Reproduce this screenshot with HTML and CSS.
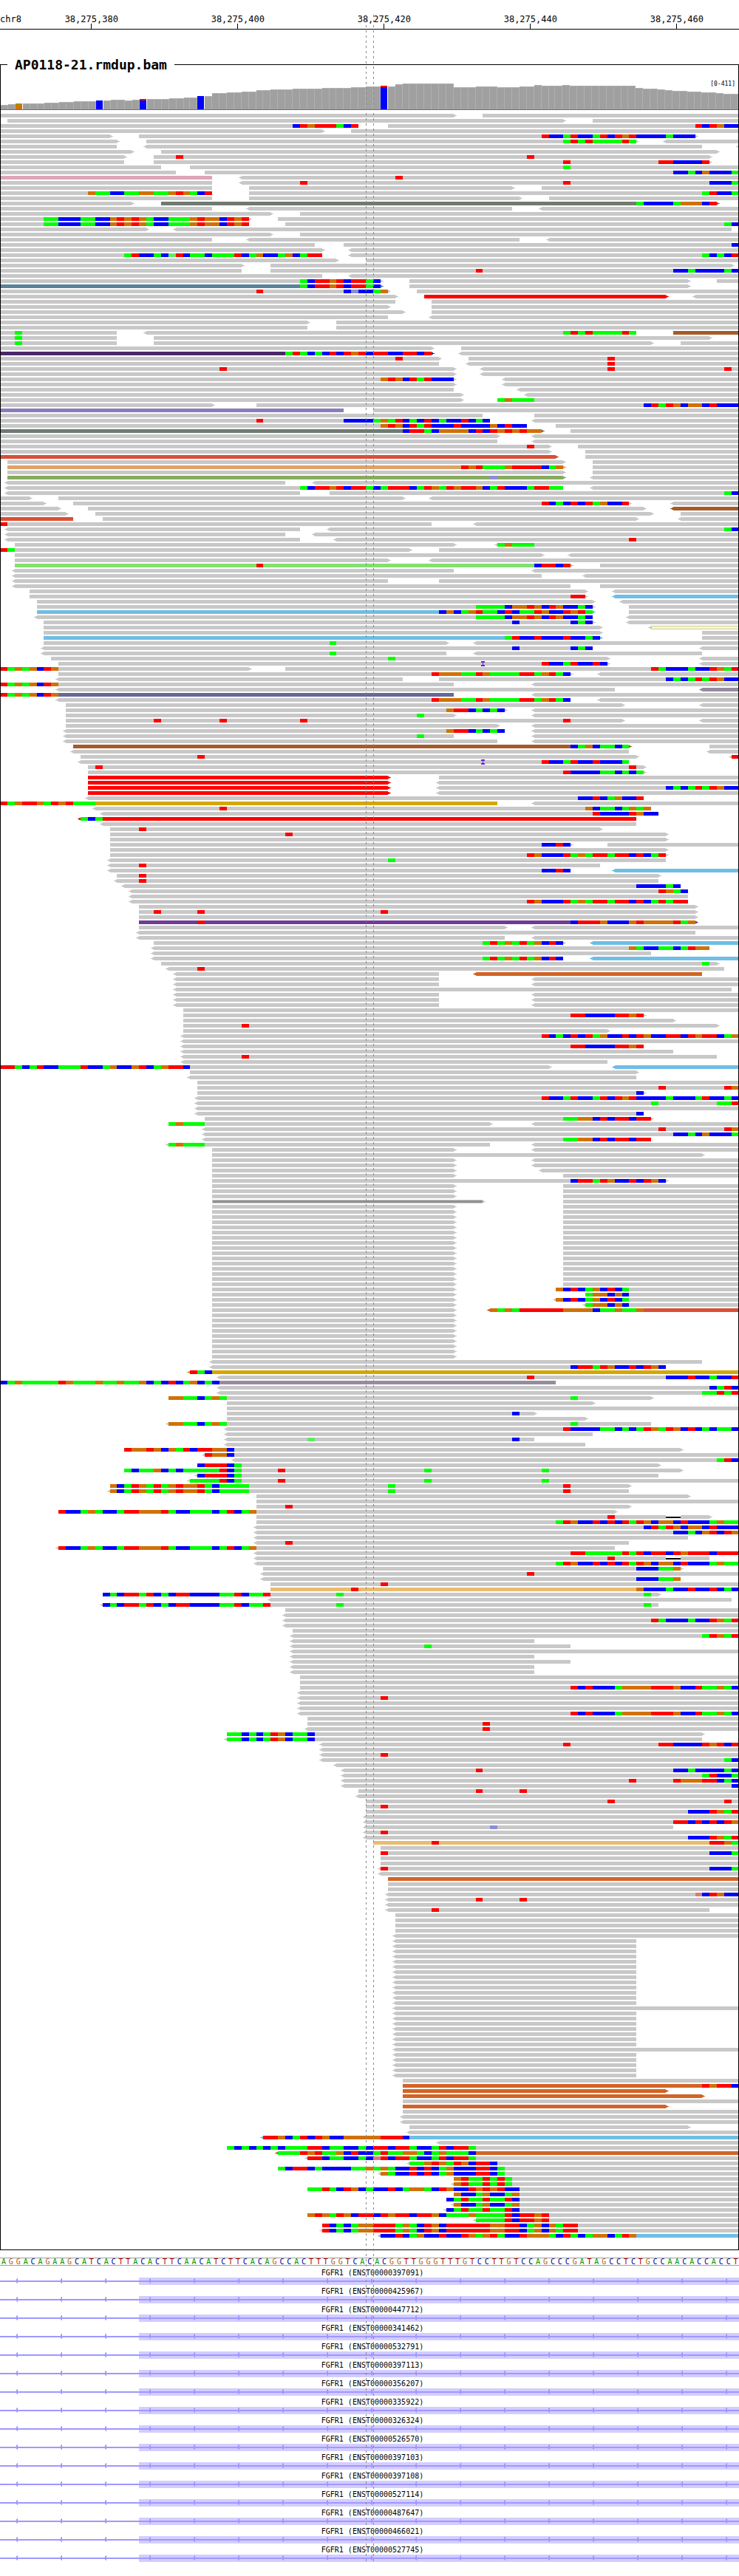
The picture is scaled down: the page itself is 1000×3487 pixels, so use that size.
FILE: index.html
```html
<!DOCTYPE html>
<html lang="en">
<head>
<meta charset="utf-8">
<title>chr8 alignments</title>
<link rel="stylesheet" href="styles.css">
</head>
<body>
<main class="browser">
  <header class="ruler" id="ruler"><span class="chrom">chr8</span></header>

  <fieldset class="panel">
    <legend class="panel-title">AP0118-21.rmdup.bam</legend>
    <div class="coverage">
      <span class="range">[0-411]</span>
      <svg class="coverage-plot" id="coverage" preserveAspectRatio="none" role="img" aria-label="Read coverage"></svg>
    </div>
    <svg class="pileup" id="pileup" preserveAspectRatio="none" role="img" aria-label="Aligned reads"></svg>
  </fieldset>

  <div class="sequence" id="sequence"></div>
  <section class="genes" id="genes"></section>
  <div class="locus-marker"></div>
</main>
<script src="script.js"></script>
</body>
</html>
```
FILE: styles.css
```css
* {
  box-sizing: border-box;
}

body {
  margin: 0;
  background: #fff;
  color: #000;
  font-family: "DejaVu Sans Mono", monospace;
}

svg {
  display: block;
  width: 100%;
  shape-rendering: crispEdges;
}

.browser {
  position: relative;
  isolation: isolate;
  overflow: hidden;
  padding-bottom: 20px;
}

/* ruler */
.ruler {
  display: grid;
  grid-template-columns: repeat(101, minmax(0, 1fr));
  height: 40px;
  padding-top: 20px;
  border-bottom: 1px solid #000;
  font-size: 12px;
  line-height: 13px;
  white-space: nowrap;
}

.chrom {
  grid-column: 1;
  grid-row: 1;
}

.tick {
  grid-row: 1;
  display: flex;
  flex-direction: column;
  align-items: center;
}

.tick::after {
  content: "";
  width: 1px;
  height: 7px;
  margin-top: -1px;
  background: #000;
}

/* alignment panel */
.panel {
  min-width: 0;
  margin: 37px 0 10px;
  padding: 0 0 16px;
  border: 1px solid #000;
}

.panel-title {
  margin-left: 9px;
  padding: 0 10px;
  font-size: 18px;
  font-weight: bold;
  line-height: 21px;
}

.coverage {
  display: flex;
  flex-direction: column;
  align-items: flex-end;
  justify-content: space-between;
  height: 51px;
  padding-top: 10px;
  margin-bottom: 5px;
  border-bottom: 1px solid #707070;
}

.range {
  height: 0;
  padding-right: 4px;
  font-size: 8px;
  line-height: 12px;
}

.coverage-plot {
  height: 35px;
}

.coverage-plot,
.pileup {
  position: relative;
  z-index: -1;
}

.pileup {
  width: calc(100% + 2px);
  margin: 0 -1px;
}

/* reference bases */
.sequence {
  display: flex;
  border: solid #a0a0a0;
  border-width: 1px 0;
  font-size: 10px;
  line-height: 9px;
}

.sequence span {
  flex: 1 1 0;
  min-width: 0;
  text-align: center;
}

.base-A { color: #009600; }
.base-C { color: #000096; }
.base-G { color: #b4640a; }
.base-T { color: #b40000; }

/* transcripts */
.genes {
  padding-top: 1px;
}

.transcript-name {
  margin: 0;
  padding: 3px 0 0 8px;
  font-size: 10px;
  font-weight: normal;
  line-height: 12px;
  text-align: center;
}

.transcript-plot {
  height: 10px;
}

/* dashed lines either side of the centre base */
.locus-marker {
  position: absolute;
  top: 20px;
  bottom: 20px;
  left: calc(100% * 50 / 101);
  width: calc(100% / 101 + 1px);
  background:
    repeating-linear-gradient(#888 0 3px, transparent 3px 7px) left / 1px 100% no-repeat,
    repeating-linear-gradient(#888 0 3px, transparent 3px 7px) right / 1px 100% no-repeat;
}
```
FILE: script.js
```js
const BASES = 101;
const WIDTH = 1000;
const ROW = 7;
const READ = 5;
const x = (base) => Math.round((base * WIDTH) / BASES);

const BASE_COLOR = {
  A: "#00ff00", C: "#0000ff", G: "#d17105", T: "#ff0000",
  a: "#64e864", c: "#8c8cdc", t: "#e07878"
};

const READ_COLOR = {
  grey: "#c8c8c8", pink: "#dfa4b9", slate: "#707a70", steel: "#5b839c", red: "#ff0000",
  brown: "#a65b28", plum: "#4a2868", lavender: "#8d7bbb", tomato: "#d94f35",
  sand: "#dfa368", olive: "#88ab60", green: "#80e070", sky: "#6fbee5",
  yellow: "#fff8b0", mauve: "#968ca0", indigo: "#666898", gold: "#d4a800",
  purple: "#703b95", rust: "#d26426", amber: "#e9bc70", dark: "#909090"
};

/* Reads with a grey outline round a thinner body. */
const OUTLINED = ["yellow", "dark"];

/* One line per row, all positions in bases from the left edge:
   12-40 read, < or > strand arrow, #name colour, 12ACGT differing bases,
   i12 insertion, d12-14 deletion, a leading 3* repeats the row. */
const ROWS = `
0-62> 66-101
1-77> 81-101
0-49 53-101 40CTGTTTACT 95TCTGCC
0-44> 48-101
0-15> 19-95> 74TCCATCCATCTGTCCCCACCC
0-16> 20-87> <91-101 77ATATAAAATA
0-16 <20-96 <101-101
0-18> 22-98>
0-17> 21-97> 24T 72T
0-17 21-97> 77T 90TTCCCCT
0-22 26-101 77A
0-24 28-101 92CCACGCCCA
0-29#pink <33-101 54T
0-29 <33-101 41T 77T 97CCCA
0-29 34-70> 74-101
0-29 34-101 12GAACCAAGGAAGTGACT 96ATCCA
0-29 34-71> 75-101
0-18> 22-98#slate> 87ACCCCAGGGCT
0-29 <34-70 <74-101
0-37> 41-101
0-34> 38-101 6AACCCAACCGTGTGACCAAAGTGGCTGT
0-34 39-101 6AACCCAACCGTGTGACCAAAGTGGCTGT 99AC
0-20> <24-100
0-37> 41-101
0-29 <34-71 <75-101
0-43 47-101 100C
0-44> <48-101
0-44 <48-101 17ATCCACaTCAACAAATCAGCCAGCATT 96ACACT
0-46> 50-101
0-33> 37-100>
0-33 37-101 65T 92CCACCCCAC
0-44 <48-101
0-52> 56-94> 98-101 41ACTTGTCTTAC
0-52#steel> 56-94> 41ACTTGTCTTAC
0-53> 57-101 35T 47CcCCAG
0-54> 58-91#red> <95-101
0-54 59-101
0-53> 59-101
0-55> 59-101
0-53 <59-101
0-42> 46-101
0-42 46-101
0-16 <20-87 92-101#brown 2A 77ATATAAAATA
0-16 21-97> 2A
0-16 21-89> 93-101 2A
0-59> 63-101
0-59#plum> <63-101 39ATACACTCTGTCTTCCTTCT
0-60> 64-101 54T 83T
0-60 <64-101 83T
0-62> <66-101 30T 83T 99T
0-62> <66-101
0-62> <69-101 52GTGCTATCCC
0-62> <69-101
0-62 <71-101
0-63> <72-101
0-63> 68-101 68AGAAA
0-29> 35-101 88CTATGCGGCTCCC
0-47#lavender 51-101
0-66 73-101
0-67 <73-101 35T 47CCCCAGATCACTCACCTCAC
0-72 76-101 52GTGCTATCCCTCCCCGCTCC
0-74#slate> 78-101 55CTTACGGGGCTCTGTGTGG
0-68> <73-101
0-68 <73-101
0-75> 79-101 72T
0-75> 80-101
0-76#tomato> 80-101
1-77> 81-101
1-77#sand> 81-101 63TGTAAAGTTTTCAG
1-77> 81-101
1-77#olive> <81-101 67c
<1-39 <43-101
<1-77 <81-101 41ACTTGTCTTACATTTCATGATGTTGCATCCCATTAA
<1-41 45-101 99AC
0-4> 8-55> <59-101
0-6> 10-86> <92-101 74TCACTCTAGCCT
0-8> 12-88> <92-101#brown
0-9> 13-89> 93-101
0-10#tomato 14-87> <93-101
0-59 <65-101 0T
<1-41 <45-101 99AC
<1-39 <43-101
<1-41 <46-101 86T
2-62> <68-101 68AGAAA
0-56> 60-101 0TA
2-74> <78-101
2-53> <59-101
2-78#green> 82-101 35T 73CTTCT
<2-62 <73-101
<2-74 <80-101
<2-53 60-101
<2-78 82-101
4-80> <84-101
4-80> <84-101#sky 78TT
5-81> <85-101
5-81> 86-101 65AAAACGGTGCTGCCAC
5-81#sky> 86-101 60CGCAGTAACTCAATGCCTGTA
<5-81 <86-101 65AAAACGGTGCTGCCAC
6-81> <86-101 70C 78CAC
6-82> <89-101#yellow
6-82> 96-101
6-82#sky> 96-101 69ATCCTCCCTCCAC
6-61> <65-101 45A
<6-81 <96-101 70C 78CAC
<6-61 <65-96 45A
7-83> <96-101 53A
8-83> <96-101 i66 74TCCATCCTC
0-34> 39-101 0TAGAGCTG 89TACCCACCTGAT
8-78> <82-101 59TGGGAATGAAAATTAGTAC
<8-55 60-101 91CACATATGCC
0-62 <73-101 0TAGAGCTG
<8-84 <96-101#mauve
0-62#indigo <73-101 0TAGAGCTG
<8-78 <82-101 59TGGGAATGAAAATTAGTAC
9-85> <96-101
9-69> <73-101 61GTTCACAC
9-62> <73-101 57A
9-85> <96-101 21T 30T 41T 77T
9-68> <73-101
<9-69 <73-101 61GTTCACAC
<9-62 <73-101 57A
<9-68 <73-101
10-86#brown> 97-101 78CAGCAACA
<10-86 <97-101
11-87> <100-101 27T 100T
<11-86 i66 74TCCATCCTCCCA
12-88> 13T 86T
12-88> 77TCCCCAACACA
12-53#red> 60-101
12-53#red> <60-101
12-53#red> <60-101 91CACATATGCC
12-53#red> <60-101
<12-88 79CCTCAGCCT
0-68#gold <73-101 0TAGTTGATGTAAA
<13-89 30T 80GCAACAGAG
<14-90 81TCCCCTGCC
<11-87#red 11ACA
<14-87
15-82> 19T
15-91> 39T
15-91>
15-78> 83-101 74CCTC
15-91>
15-91> 72TGCCCTAGATTATTCTCAT
<15-91 53A
<15-82 19T
<15-78 <84-101#sky 74CCTC
16-90> 19T
<16-90 19T
<17-93 87CCCCAC
<18-94 90TGAC
<18-94
<18-94 72TGCCCTAGATTATTCTCATATT
19-95>
19-95> 21T 27T 52T
19-95>
19-95#purple> 27T 78CTTTGCCCGTGGGGTAG
19-69> <73-101
<19-95
<19-69 <73-101
21-77> <81-101#sky 66ATAGATAGCTC
<21-97 86GACCAACATGG
<21-89
<21-77 <81-101#sky 66ATAGATAGCTC
22-98> 96A
<23-99 27T
<24-60 <65-96#rust
2*<24-60 <73-101
<24-100
3*<24-60 <73-101
25-101
25-88> 78TTCCCCTTGT
25-92>
25-98> 33T
25-83>
<25-101 74TCACTCTAGCCTCTGCCTTCTGTTCAG
<25-101
<25-88 78TTCCCCTTGT
<25-92
<25-98 33T
<25-83
0-75> <84-101#sky 0TTACATCCAAATCCAGCCGTCAGTTC
26-87>
<26-87
27-101
27-101 90T 99TG
27-88> 87C
<27-101 74TCCATCCATCTGTCCCCACCCATCCAC
<27-101 89A 98AAT
<27-101
<27-88 87C
28-89> 77AAGGCTCTTCTT
23-67> <73-101 23AGAAA
<28-101 90T 99TG
<28-101 92CCACGCCCA
<28-89 77AAGGCTCTTCTT
<23-67 <73-101 23AGAAA
29-62> <73-101
29-96>
2*29-62> <73-101
29-62> <74-101
29-62> 77-101
29-91> 78CTTATGCCTCTGC
3*29-62> 77-101
29-66#dark> 77-101
16*29-62> 77-101
29-62> 76-101 76GCTCAGCTCA
29-62> 80-101 80AGGCGC
29-62> <76-101 76GCTCAGCTCA
29-62> <80-101 80AGGCGC
29-62> <67-101#tomato 67GAGATTTTTTGGGGCAAGAAG
9*29-62>
<29-96
<29-91 78CTTATGCCTCTGC
<26-101#gold 26TAC
<30-101 72T 91CCCTCCACCT
0-76#mauve 0CAGAAAAATGAAAGAAGAAGCACTCAGCAC
<30-101 97CATC
<30-101 96AATAT
23-89> 23GGAACAGA 78A
31-81>
31-101
31-73> 70C
31-80>
<23-89 23GGAACAGA 78A
<31-101 77TCCCCAACACATGATGCTCACAAC
<31-81
<31-73 42a 70C
<31-80
17-93> 17TGGTGCGATCTTGGC
<28-101 28TGGC
<32-101 98ATC
27-90> 27CTTTCA
17-93> 17ACAAGCACAAAAATCA 38T 58A 74A
<27-90 27CTTTCA
<26-101 26AAAATCA 38T 58A 74A
15-86> 15GCATGATAGTGGTACAAAA 53A 77T
<15-86 15GCATGATAGTGGTACAAAA 53A 77T
35-94>
35-101
35-86> 39T
8-84> 8TCCAGACCATTGGGTACCAAACATCAG
35-97> 83T d91-93
35-101 76ATGCCTCTCTATGCGGCTCCCAGAA
<35-101 88CTATGCGGCTCCC
<35-101 92CCACGTCTG
<35-94
<35-86 39T
<8-84 8TCCAGACCATTGGGTACCAAACATCAG
<35-101 78TTAAAAATATCTTCTGTTTCTTT
<35-97 83T d91-93
<35-101 76ATGCCTCTCTATGCGGCTCCCAGAA
36-93> 87CCCAAG
<36-101 72T
<36-93 87CCCAAG
37-101 52T
37-101#amber 48T 87GCCCACCTCCTCAC
14-90> 14CACTTATCACTTCCCCAATCAAT 46A 88A
<37-100
<14-90 14CACTTATCACTTCCCCAATCAAT 46A 88A
39-101
<39-101
<39-101 89TACCCACCTGAT
<39-101
40-101
<40-101 96ATGAT
<40-73
<40-78 58A
<40-101
<40-73
<40-78
2*<40-73
2*41-101
41-101 78TCTCCCAGGGGTTTGCCTAAGAC
<41-101
<41-101 52T
2*<41-101
<41-101 78TCTCCCAGGGGTTTGCCTAAGAC
42-101
42-101 66T
<42-101 66T
31-96> 31AACACATGCAAC
<31-96 31AACACATGCAAC
<44-101 77T 90TTCCCCTGTCT
<44-101
<44-101 52T
<44-101 99AC
<46-101
<47-101 65T 92CCACCCCAC
<47-101 96ATCCA
<47-101 86T 92TGGGTTCAC
<47-101 100C
49-101 65T 71T
<49-101
50-101 83T 99T
50-101 52T
50-101 94CCCTGAT
<50-101
<50-101 92TTCTCTCTG
<50-92 67c
<50-101 52T
<50-101 94CCCTGAT
51-101#amber 59T 97TTGA
52-101
52-101 52T 97CCCA
2*52-101
<52-101 52T 97CCCA
<52-101
53-101#rust
2*53-101
<53-101 95tCTGCC
<53-101 65T 71T
<53-101
<53-97 59T
4*54-101
<54-101
13*<54-87
<54-101
7*<54-87
<54-101
5*<54-87
55-101
55-101#rust 96TGTTC
55-91#rust>
55-96#rust>
55-101
55-91#rust>
55-101
2*<55-101
56-94>
<56-101
<36-101#sky 36TTGCATCTGCCGGGGGTTTC
<60-101
31-101 31ACACACACAAATTCAACCACTTCTTACCATCTTA
<38-101#rust 38AAATGTAAGCTCCATAAGGACAGAAAC
<42-101 42TTCAACCACtTCTTACCATCTTA
<56-101 56AAGTGATGCTTC
38-101 38ACTTCACCCCAAGAGACCTCTCAGCCCTTCA
<52-101 52GACCTCTCAGCCCTTCA
62-101 62GTAATATA
<62-101 62GTAATATA
42-101 42AATACTGCACCTCAGGACTGCCTGTGTCC
62-101 62GCCAGCCAG
61-101 61CATAATAATC
<62-101 62GCCAGCCAG
<61-101 61CATAATAATC
42-101 42GTGATGCTTCTGTTCTTGCAAAGAAAATCTTGT
<65-101 65AAAATCTTGT
44-101 44TCACAGGTTTAGACTGCTTTTTTGGTTCAGCGATT
<44-101 44TCACAGGTTTAGACTGCTTTTTTGGTTCAGCGATT
<52-101#sky 52CCTCAGCCTCCTGAGTACCTGGGACTACAGGCATG
`;

/* Bar heights as "height x number of bases". */
const COVERAGE = "6x1 7x1 8x4 9x2 10x2 11x3 12x2 13x2 12x1 13x1 14x4 15x2 16x2 18x2 22x2 23x2 24x2 26x2 27x3 28x4 29x4 30x2 31x2 32x1 31x1 34x1 35x7 30x3 31x3 30x3 31x2 33x1 32x3 33x1 32x9 29x1 28x2 27x1 26x1 25x2 24x2 23x2 22x1 21x2";

/* Coloured bars, from the top: [colour, height], the last one fills the rest. */
const VARIANTS = {
  2: [["A", 1], ["G"]],
  13: [["C"]],
  19: [["T", 2], ["C"]],
  27: [["C"]],
  52: [["T", 2], ["C"]]
};

const SEQUENCE = "AGGACAGAAGCATCACTTACACTTCAACATCTTCACAGCCACTTTGGTCACACGGTTGGGTTTGTCCTTGTCCAGCCCGATAGCCTCTGCCAACACCACCT";

const TRANSCRIPTS = [
  "397091", "425967", "447712", "341462", "532791", "397113", "356207", "335922",
  "326324", "526570", "397103", "397108", "527114", "487647", "466021", "527745"
];

const rect = (left, top, width, height, fill) =>
  `<rect x="${left}" y="${top}" width="${width}" height="${height}" fill="${fill}"/>`;

function drawRead(top, [, left, start, end, name = "grey", right]) {
  const a = x(+start);
  const b = x(+end);
  const fill = READ_COLOR[name];
  const outlined = OUTLINED.includes(name);
  const edge = outlined ? READ_COLOR.grey : fill;
  let out = rect(a, top, b - a, READ, edge);
  if (left) out += rect(a - 2, top + 1, 2, 3, edge) + rect(a - 4, top + 2, 2, 1, edge);
  if (right) out += rect(b, top + 1, 2, 3, edge) + rect(b + 2, top + 2, 2, 1, edge);
  if (outlined) out += rect(a + 1, top + 1, b - a - 1, 3, fill);
  return out;
}

function drawToken(token, top) {
  let m = token.match(/^(<?)(\d+)-(\d+)(?:#(\w+))?(>?)$/);
  if (m) return drawRead(top, m);
  m = token.match(/^i(\d+)$/);
  if (m) {
    const c = x(+m[1]);
    const purple = "#6e1edc";
    return rect(c - 2, top - 1, 5, 2, purple) + rect(c, top, 1, 5, purple) + rect(c - 2, top + 4, 5, 2, purple);
  }
  m = token.match(/^d(\d+)-(\d+)$/);
  if (m) {
    const a = x(+m[1]);
    const w = x(+m[2]) - a;
    return rect(a, top, w, READ, "#fff") + rect(a, top + 2, w, 2, "#000");
  }
  m = token.match(/^(\d+)([A-Za-z]+)$/);
  return [...m[2]].map((base, i) => {
    const a = x(+m[1] + i);
    return rect(a, top, x(+m[1] + i + 1) - a, READ, BASE_COLOR[base]);
  }).join("");
}

function drawPileup() {
  const rows = ROWS.trim().split("\n").flatMap((line) => {
    const m = line.match(/^(\d+)\*(.*)$/);
    return m ? Array(+m[1]).fill(m[2]) : [line];
  });
  const height = rows.length * ROW - (ROW - READ);
  const svg = document.getElementById("pileup");
  svg.setAttribute("viewBox", `0 0 ${WIDTH} ${height}`);
  svg.style.height = `${height}px`;
  svg.innerHTML = rows.map((row, i) =>
    row.split(" ").map((token) => drawToken(token, i * ROW)).join("")
  ).join("");
}

function drawCoverage() {
  const heights = COVERAGE.split(" ").flatMap((run) => {
    const [h, n] = run.split("x").map(Number);
    return Array(n).fill(h);
  });
  const svg = document.getElementById("coverage");
  svg.setAttribute("viewBox", `0 0 ${WIDTH} 35`);
  svg.innerHTML = heights.map((h, i) => {
    const a = x(i);
    const w = x(i + 1) - a;
    if (!VARIANTS[i]) {
      return rect(a, 35 - h, w, h, "#b0b0b0") + rect(a, 36 - h, w - 1, h - 1, "#a0a0a0");
    }
    let top = 35 - h;
    return VARIANTS[i].map(([base, part]) => {
      const size = part || 35 - top;
      const out = rect(a, top, w - 1, size, BASE_COLOR[base]);
      top += size;
      return out;
    }).join("");
  }).join("");
}

function drawRuler() {
  const ruler = document.getElementById("ruler");
  for (let n = 0; n < 5; n++) {
    const tick = document.createElement("span");
    tick.className = "tick";
    tick.style.gridColumn = 13 + n * 20;
    tick.textContent = (38275380 + n * 20).toLocaleString("en-US");
    ruler.append(tick);
  }
}

function drawSequence() {
  document.getElementById("sequence").innerHTML =
    [...SEQUENCE].map((base) => `<span class="base-${base}">${base}</span>`).join("");
}

function drawGenes() {
  let plot = rect(x(19), 0, WIDTH - x(19), 10, "#d3cdff") + rect(0, 4, WIDTH, 2, "#a097ff");
  for (let c = 23; c < WIDTH; c += 60) {
    plot += `<path d="M${c} 1h1v7h-1v-1h-1v-2h-1v-1h1v-2h1z" fill="#a097ff"/>`;
  }
  document.getElementById("genes").innerHTML = TRANSCRIPTS.map((id) => `
    <h2 class="transcript-name">FGFR1 (ENST00000${id})</h2>
    <svg class="transcript-plot" viewBox="0 0 ${WIDTH} 10" preserveAspectRatio="none">${plot}</svg>`).join("");
}

drawRuler();
drawCoverage();
drawPileup();
drawSequence();
drawGenes();
```
